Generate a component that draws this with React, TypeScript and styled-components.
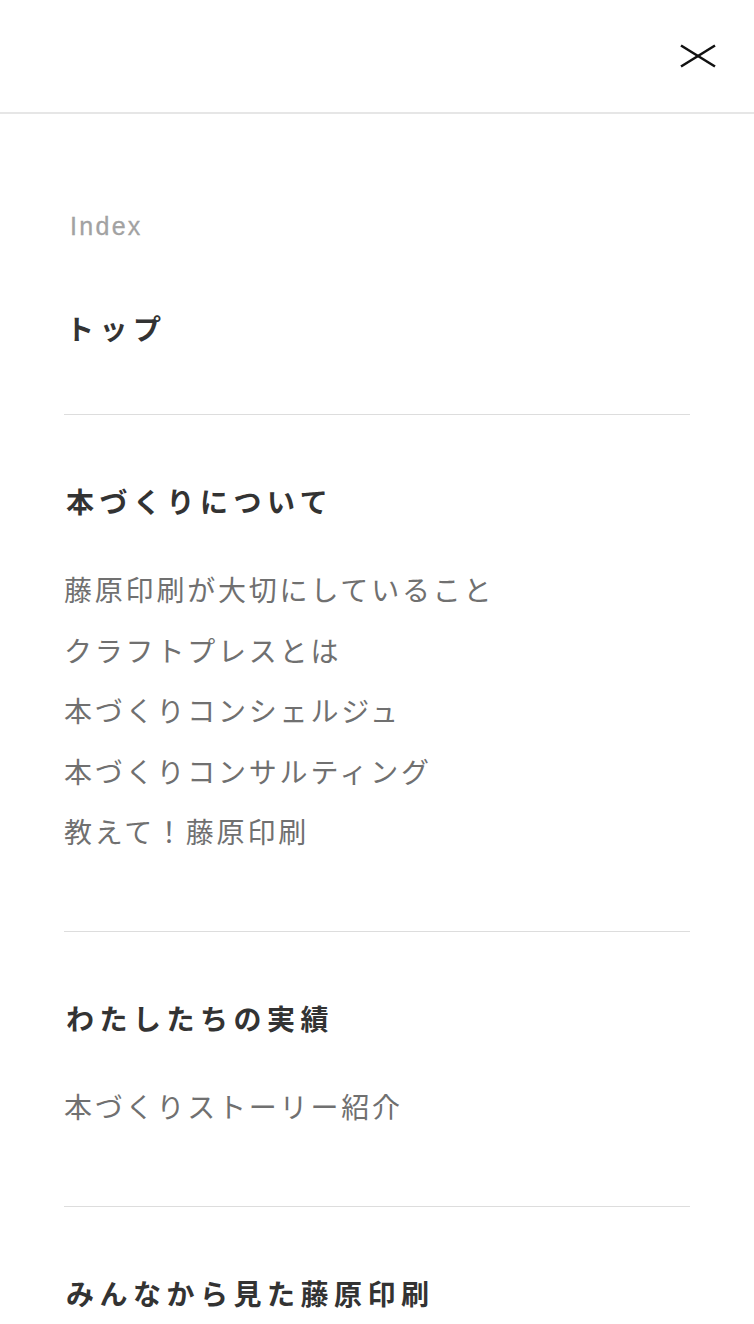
import React from "react";
import styled, { createGlobalStyle } from "styled-components";

const Global = createGlobalStyle`
  html, body { margin: 0; padding: 0; background: #fff; }
  body { font-family: "Noto Sans CJK JP", "Noto Sans", sans-serif; }
  ul { margin: 0; padding: 0; list-style: none; }
`;

const Page = styled.div`
  width: 754px;
  min-height: 1324px;
  background: #fff;
`;

const Header = styled.header`
  height: 114px;
  border-bottom: 2px solid #e6e6e6;
  box-sizing: border-box;
  display: flex;
  align-items: center;
  justify-content: flex-end;
  padding: 0 38px 0 0;
`;

const CloseButton = styled.button`
  border: 0;
  background: none;
  padding: 0;
  width: 36px;
  height: 24px;
  display: flex;
  cursor: pointer;
`;

const Nav = styled.nav`
  padding: 97px 64px 0;
`;

const IndexLabel = styled.div`
  font-family: "Liberation Sans", Arial, sans-serif;
  font-size: 25px;
  line-height: 30px;
  font-weight: 400;
  letter-spacing: 2.3px;
  color: #a2a2a2;
  -webkit-text-stroke: 0.3px #a2a2a2;
  padding-left: 6px;
  margin-bottom: 1px;
`;

const Section = styled.section<{ $last?: boolean }>`
  padding: 66px 0;
  border-bottom: ${(p) => (p.$last ? "none" : "1px solid #dddddd")};
`;

const Heading = styled.h2`
  margin: 0;
  padding-left: 2px;
  font-size: 28px;
  line-height: 40px;
  font-weight: 700;
  letter-spacing: 5.5px;
  color: #333333;
`;

const List = styled.ul`
  margin-top: 38px !important;
  margin-bottom: 3.5px !important;
`;

const Item = styled.li`
  font-size: 28px;
  line-height: 60.5px;
  letter-spacing: 0.1em;
  color: #707070;
  font-weight: 400;
`;

const sections: { title: string; items: string[] }[] = [
  { title: "トップ", items: [] },
  {
    title: "本づくりについて",
    items: [
      "藤原印刷が大切にしていること",
      "クラフトプレスとは",
      "本づくりコンシェルジュ",
      "本づくりコンサルティング",
      "教えて！藤原印刷",
    ],
  },
  { title: "わたしたちの実績", items: ["本づくりストーリー紹介"] },
  { title: "みんなから見た藤原印刷", items: [] },
];

export default function App() {
  return (
    <Page>
      <Global />
      <Header>
        <CloseButton aria-label="close">
          <svg width="36" height="24" viewBox="0 0 36 24">
            <line x1="1" y1="1.5" x2="35" y2="22.5" stroke="#111" strokeWidth="2.6" />
            <line x1="1" y1="22.5" x2="35" y2="1.5" stroke="#111" strokeWidth="2.6" />
          </svg>
        </CloseButton>
      </Header>
      <Nav>
        <IndexLabel>Index</IndexLabel>
        {sections.map((s, i) => (
          <Section key={s.title} $last={i === sections.length - 1}>
            <Heading>{s.title}</Heading>
            {s.items.length > 0 && (
              <List>
                {s.items.map((it) => (
                  <Item key={it}>{it}</Item>
                ))}
              </List>
            )}
          </Section>
        ))}
      </Nav>
    </Page>
  );
}
